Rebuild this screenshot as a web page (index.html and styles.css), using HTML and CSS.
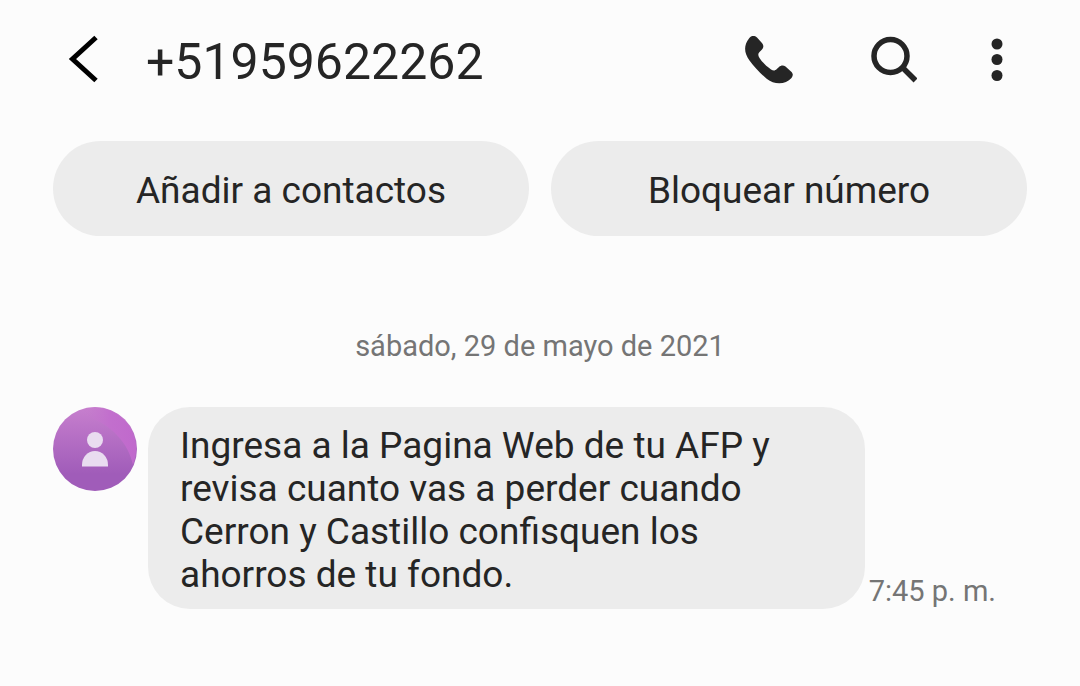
FILE: index.html
```html
<!DOCTYPE html>
<html lang="es">
<head>
    <meta charset="UTF-8">
    <meta name="viewport" content="width=device-width, initial-scale=1.0">
    <title>Mensajes</title>
    <link rel="stylesheet" href="styles.css">
</head>
<body>
    <header class="top-bar">
        <button class="icon-btn back-btn" aria-label="Volver">
            <svg width="32" height="50" viewBox="0 0 32 50">
                <path d="M28 2.500 L4.500 24 L28 45.500" fill="none" stroke="#000" stroke-width="5"/>
            </svg>
        </button>
        <h1>+51959622262</h1>
        <div class="actions">
            <button class="icon-btn" aria-label="Llamar">
                <svg width="48" height="48" viewBox="0 0 48 48">
                    <path d="M4 2.500 C6.500 -.8 9.500 -.8 12 1.500 L16.500 6.500 C19 9 18.800 11.500 17 13.500 L14.500 16 C12.800 17.800 13 19.500 14.500 22 C17.500 26.500 21.500 30.500 26 33.500 C28.500 35 30 34.800 31.800 33 L34 31 C36 29 38.500 29 40.500 30.500 L46 35.500 C48.300 37.500 48.300 39.700 46.500 42 C40.500 49 29 48.700 22 43 C15.500 37.500 9.500 31.500 4.500 24.500 C-1 17 -1.500 9.500 4 2.500 Z" fill="#252525"/>
                </svg>
            </button>
            <button class="icon-btn" aria-label="Buscar">
                <svg width="50" height="48" viewBox="0 0 50 48">
                    <circle cx="23.500" cy="20" r="16.500" fill="none" stroke="#252525" stroke-width="5.500"/>
                    <path d="M35 31 L48.500 44.500" stroke="#252525" stroke-width="5.500"/>
                </svg>
            </button>
            <button class="icon-btn" aria-label="Más opciones">
                <svg width="12" height="48" viewBox="0 0 12 48">
                    <g fill="#252525">
                        <circle cx="6" cy="8" r="5.500"/>
                        <circle cx="6" cy="23.500" r="5.500"/>
                        <circle cx="6" cy="39.500" r="5.500"/>
                    </g>
                </svg>
            </button>
        </div>
    </header>

    <main>
        <div class="contact-options">
            <button>Añadir a contactos</button>
            <button>Bloquear número</button>
        </div>

        <p class="date">sábado, 29 de mayo de 2021</p>

        <div class="message">
            <svg class="avatar" width="84" height="84" viewBox="0 0 84 84">
                <defs>
                    <linearGradient id="base" x1="0" y1="0" x2="0" y2="1">
                        <stop offset="0" stop-color="#c77fce"/>
                        <stop offset="0.8" stop-color="#a05cb9"/>
                    </linearGradient>
                    <linearGradient id="shine" x1="0" y1="0" x2="1" y2="0">
                        <stop offset="0" stop-color="#c67acd" stop-opacity="0"/>
                        <stop offset="0.5" stop-color="#c26fcd"/>
                        <stop offset="1" stop-color="#c069cc"/>
                    </linearGradient>
                </defs>
                <circle cx="42" cy="42" r="42" fill="url(#base)"/>
                <path d="M30 1.700 A42 42 0 0 1 80 58 C76 38 60 17 30 8 Z" fill="url(#shine)"/>
                <g fill="#e9dcf0">
                    <circle cx="42" cy="33" r="8"/>
                    <path d="M29 59.500 V58 A13 14 0 0 1 55 58 V59.500 Z"/>
                </g>
            </svg>
            <p class="bubble">Ingresa a la Pagina Web de tu AFP y revisa cuanto vas a perder cuando Cerron y Castillo confisquen los ahorros de tu fondo.</p>
            <time datetime="2021-05-29T19:45">7:45 p. m.</time>
        </div>
    </main>
</body>
</html>
```

FILE: styles.css
```css
body {
    font-family: Roboto, sans-serif;
    background-color: #fcfcfc;
    color: #252525;
    margin: 0;
}

button {
    font-family: inherit;
    color: inherit;
    border: none;
    cursor: pointer;
}

.top-bar {
    display: flex;
    align-items: center;
    height: 120px;
    padding: 0 77px 0 68px;
}

.top-bar h1 {
    font-size: 50px;
    font-weight: 400;
    line-height: 60px;
    margin: 4px 0 0;
}

.icon-btn {
    display: flex;
    padding: 0;
    background: none;
}

.back-btn {
    margin-right: 46px;
}

.actions {
    display: flex;
    gap: 74px;
    margin-left: auto;
}

main {
    padding: 21px 53px 76px;
}

.contact-options {
    display: grid;
    grid-template-columns: 1fr 1fr;
    gap: 22px;
}

.contact-options button {
    height: 95px;
    padding: 4px 20px 0;
    font-size: 37px;
    background-color: #ececec;
    border-radius: 48px;
}

.contact-options button:hover {
    background-color: #e0e0e0;
}

.date {
    margin: 92px 0 43px;
    font-size: 29px;
    line-height: 36px;
    text-align: center;
    color: #757575;
}

.message {
    display: flex;
    align-items: flex-end;
}

.avatar {
    flex-shrink: 0;
    align-self: flex-start;
    margin-right: 11px;
}

.bubble {
    flex: 1;
    margin: 0;
    padding: 17px 48px 13px 32px;
    font-size: 37px;
    line-height: 43px;
    background-color: #ececec;
    border-radius: 42px;
}

.message time {
    margin: 0 31px 0 4px;
    font-size: 29px;
    line-height: 36px;
    white-space: nowrap;
    color: #757575;
}
```
